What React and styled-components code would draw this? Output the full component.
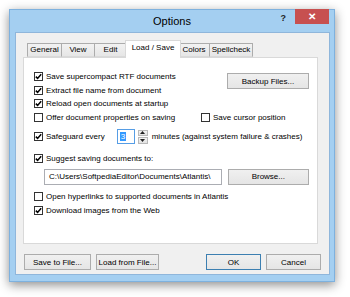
import React from "react"
import styled, { createGlobalStyle } from "styled-components"

const GlobalStyle = createGlobalStyle`
	html, body {
		margin: 0;
		background: #ffffff;
	}
	body {
		font-family: "Liberation Sans", Arial, sans-serif;
		font-size: 8px;
		color: #000000;
	}
`

const Page = styled.div`
	padding: 9px 0 0 9px;
	height: 297px;
	box-sizing: border-box;
`

const Window = styled.div`
	width: 326px;
	height: 273px;
	box-sizing: border-box;
	display: flex;
	flex-direction: column;
	background: #a4cff1;
	border: 1px solid #7eb1de;
	box-shadow: 0 3px 10px rgba(0, 0, 0, 0.45);
`

const TitleBar = styled.div`
	height: 22px;
	display: grid;
	grid-template-columns: 1fr auto 1fr;
	flex-shrink: 0;
`

const Title = styled.div`
	font-size: 11px;
	line-height: 22px;
	color: #000;
`

const Controls = styled.div`
	display: flex;
	justify-content: flex-end;
	align-items: flex-start;
	padding-right: 5px;
`

const Help = styled.span`
	font-size: 9px;
	font-weight: bold;
	color: #222;
	margin: 3px 9px 0 0;
`

const Close = styled.div`
	width: 34px;
	height: 15px;
	margin-top: -1px;
	background: #c75050;
	color: #fff;
	font-size: 10px;
	font-weight: bold;
	display: flex;
	align-items: center;
	justify-content: center;
`

const Client = styled.div`
	flex: 1;
	margin: 0 4px 6px 5px;
	padding: 7px 11px 0 7px;
	background: #f0f0f0;
	border: 1px solid #8fb6db;
	display: flex;
	flex-direction: column;
`

const TabRow = styled.div`
	display: flex;
	align-items: flex-end;
	height: 17px;
	margin-left: 4px;
	position: relative;
	z-index: 1;
`

const Tab = styled.div`
	box-sizing: border-box;
	width: ${p => p.$w}px;
	height: ${p => (p.$active ? 18 : 14)}px;
	margin: ${p => (p.$active ? "0 -2px -1px -2px" : "0")};
	padding-top: ${p => (p.$active ? 2 : 1)}px;
	text-align: center;
	border: 1px solid ${p => (p.$active ? "#d9d9d9" : "#acacac")};
	border-bottom: ${p => (p.$active ? "none" : "1px solid #d9d9d9")};
	margin-left: ${p => (p.$first ? 0 : p.$active ? -2 : -1)}px;
	background: ${p => (p.$active ? "#ffffff" : "linear-gradient(#f2f2f2, #e6e6e6)")};
	position: relative;
	z-index: ${p => (p.$active ? 2 : 1)};
	white-space: nowrap;
`

const Panel = styled.div`
	height: 187px;
	box-sizing: border-box;
	background: #ffffff;
	border: 1px solid #d9d9d9;
	padding: 12px 8px 0 10px;
	display: flex;
	flex-direction: column;
`

const TopGrid = styled.div`
	display: grid;
	grid-template-columns: 167px 1fr;
	grid-auto-rows: 13.5px;
`

const Row = styled.div`
	display: flex;
	align-items: center;
	height: ${p => p.$h || 13.5}px;
	margin-top: ${p => p.$mt || 0}px;
	padding-left: ${p => p.$indent || 0}px;
	white-space: nowrap;
`

const Box = styled.span`
	width: 9px;
	height: 9px;
	flex-shrink: 0;
	box-sizing: border-box;
	border: 1px solid #333333;
	background: #ffffff;
	margin-right: 3px;
	display: flex;
	align-items: center;
	justify-content: center;
`

const Button = styled.div`
	box-sizing: border-box;
	width: ${p => p.$w}px;
	height: 16px;
	display: flex;
	align-items: center;
	justify-content: center;
	border: 1px solid ${p => (p.$default ? "#3c7fb1" : "#acacac")};
	background: linear-gradient(#f0f0f0, #e5e5e5);
	color: #000;
	white-space: nowrap;
`

const BackupButton = styled(Button)`
	grid-column: 2;
	grid-row: 1 / span 3;
	justify-self: end;
	margin-top: 3px;
`

const SpinInput = styled.div`
	box-sizing: border-box;
	width: 18px;
	height: 15px;
	margin-left: 12px;
	border: 1px solid #569de5;
	background: #fff;
	padding: 2px 0 0 2px;
`

const Selected = styled.span`
	background: #3399ff;
	color: #fff;
	padding: 0 1px;
`

const Spinner = styled.div`
	width: 10px;
	height: 14px;
	margin: 0 4px 0 3px;
	display: flex;
	flex-direction: column;
	gap: 1px;
`

const SpinBtn = styled.div`
	flex: 1;
	border: 1px solid #b9b9b9;
	background: linear-gradient(#f3f3f3, #e3e3e3);
	display: flex;
	align-items: center;
	justify-content: center;
`

const PathField = styled.div`
	box-sizing: border-box;
	width: 179px;
	height: 16px;
	border: 1px solid #abadb3;
	background: #fff;
	padding: 0 0 0 4px;
	line-height: 14px;
	overflow: hidden;
	white-space: nowrap;
	margin-right: 6px;
`

const Footer = styled.div`
	display: flex;
	margin: 10px -3px 0 1px;
	gap: 5px;
`

const Spacer = styled.div`
	flex: 1;
`

const Check = ({ checked, children }) => (
	<>
		<Box>
			{checked && (
				<svg width="7" height="7" viewBox="0 0 7 7">
					<path d="M0.8 3.6 L2.6 5.4 L6.2 1.2" fill="none" stroke="#000" strokeWidth="1.5" />
				</svg>
			)}
		</Box>
		<span>{children}</span>
	</>
)

const Arrow = ({ up }) => (
	<svg width="5" height="3" viewBox="0 0 5 3">
		<path d={up ? "M0 3 L2.5 0 L5 3 Z" : "M0 0 L2.5 3 L5 0 Z"} fill="#222" />
	</svg>
)

const tabs = [
	{ label: "General", w: 35 },
	{ label: "View", w: 34 },
	{ label: "Edit", w: 33 },
	{ label: "Load / Save", w: 56, active: true },
	{ label: "Colors", w: 32 },
	{ label: "Spellcheck", w: 44 },
]

const App = () => (
	<Page>
		<GlobalStyle />
		<Window>
			<TitleBar>
				<div />
				<Title>Options</Title>
				<Controls>
					<Help>?</Help>
					<Close>✕</Close>
				</Controls>
			</TitleBar>
			<Client>
				<TabRow>
					{tabs.map((t, i) => (
						<Tab key={t.label} $w={t.w} $active={t.active} $first={i === 0}>
							{t.label}
						</Tab>
					))}
				</TabRow>
				<Panel>
					<TopGrid>
						<Row><Check checked>Save supercompact RTF documents</Check></Row>
						<BackupButton $w={82}>Backup Files...</BackupButton>
						<Row><Check checked>Extract file name from document</Check></Row>
						<Row><Check checked>Reload open documents at startup</Check></Row>
						<Row><Check>Offer document properties on saving</Check></Row>
						<Row><Check>Save cursor position</Check></Row>
					</TopGrid>
					<Row $h={15} $mt={5}>
						<Check checked>Safeguard every</Check>
						<SpinInput><Selected>3</Selected></SpinInput>
						<Spinner>
							<SpinBtn><Arrow up /></SpinBtn>
							<SpinBtn><Arrow /></SpinBtn>
						</Spinner>
						<span>minutes (against system failure &amp; crashes)</span>
					</Row>
					<Row $mt={7.5}><Check checked>Suggest saving documents to:</Check></Row>
					<Row $h={16} $mt={3.5} $indent={10}>
						<PathField>C:\Users\SoftpediaEditor\Documents\Atlantis\</PathField>
						<Button $w={82}>Browse...</Button>
					</Row>
					<Row $mt={5.5}><Check>Open hyperlinks to supported documents in Atlantis</Check></Row>
					<Row><Check checked>Download images from the Web</Check></Row>
				</Panel>
				<Footer>
					<Button $w={67}>Save to File...</Button>
					<Button $w={63}>Load from File...</Button>
					<Spacer />
					<Button $w={55} $default>OK</Button>
					<Button $w={55}>Cancel</Button>
				</Footer>
			</Client>
		</Window>
	</Page>
)

export default App
